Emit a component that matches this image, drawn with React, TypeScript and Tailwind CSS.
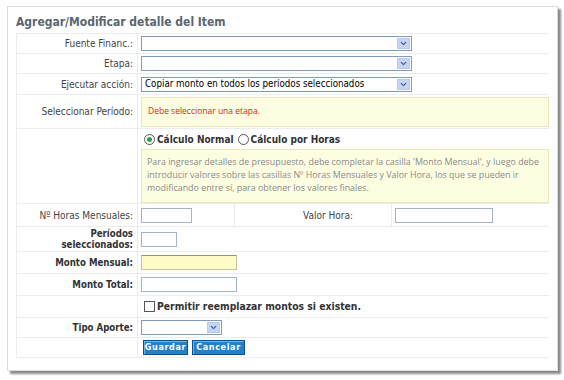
import { ChevronDown } from "lucide-react"

function Select({ width, value }: { width: string; value?: string }) {
  return (
    <div className={`flex h-[15px] items-center border border-[#7f9db9] bg-white ${width}`}>
      <span className="flex-1 truncate pl-[3px] text-[9.7px] leading-none text-black">{value}</span>
      <span className="m-px flex h-[11px] w-[13px] items-center justify-center border border-[#b8c9ef] bg-[#c6d5f7]">
        <ChevronDown className="h-[9px] w-[9px] text-[#4d6185]" strokeWidth={3.5} />
      </span>
    </div>
  )
}

function Input({ width, yellow }: { width: string; yellow?: boolean }) {
  return (
    <div
      className={`h-[15px] border ${width} ${
        yellow ? "border-[#c9c19a] border-t-[#a0956a] bg-[#fffcc8]" : "border-[#a5b2c2] bg-white"
      }`}
    />
  )
}

function Row({
  label,
  bold,
  height,
  children,
}: {
  label?: React.ReactNode
  bold?: boolean
  height: string
  children?: React.ReactNode
}) {
  return (
    <div className={`flex border-b border-[#ececec] ${height}`}>
      <div
        className={`flex w-[121px] shrink-0 items-center justify-end border-r border-[#ececec] pr-[4px] text-right leading-[11px] ${
          bold ? "text-[9.6px] font-bold text-[#333]" : "text-[#444]"
        }`}
      >
        {label}
      </div>
      <div className="flex flex-1 items-center pl-[3px]">{children}</div>
    </div>
  )
}

function Button({ label, width }: { label: string; width: string }) {
  return (
    <button
      className={`h-[15px] ${width} border border-[#0f5088] bg-[#2381c8] text-[9px] font-semibold leading-none tracking-[0.6px] text-white shadow-[inset_1px_1px_0_#6fb3e6]`}
    >
      {label}
    </button>
  )
}

export default function App() {
  return (
    <div className="h-[380px] w-[564px] bg-white pl-[7px] pt-[6px] font-['DejaVu_Sans','Verdana',sans-serif] text-[10px] [font-stretch:condensed]">
      <div className="h-[365px] w-[551px] border border-[#dcdcdc] bg-white px-[8px] shadow-[3px_3px_2px_#8a8a8a]">
        <h1 className="flex h-[26px] items-center pt-[4px] text-[12px] font-bold text-[#5a6670]">
          Agregar/Modificar detalle del Item
        </h1>

        <div className="border-l border-t border-[#ececec]">
          <Row label="Fuente Financ.:" height="h-[20px]">
            <Select width="w-[271px]" />
          </Row>
          <Row label="Etapa:" height="h-[20px]">
            <Select width="w-[271px]" />
          </Row>
          <Row label="Ejecutar acción:" height="h-[21px]">
            <Select width="w-[271px]" value="Copiar monto en todos los períodos seleccionados" />
          </Row>
          <Row label="Seleccionar Período:" height="h-[34px]">
            <div className="flex h-[30px] flex-1 items-center border border-[#ebe6b8] bg-[#fdfde2] pl-[6px] font-['Open_Sans',sans-serif] text-[8.5px] text-[#e0191b] [font-stretch:normal]">
              Debe seleccionar una etapa.
            </div>
          </Row>
          <Row height="h-[75px]">
            <div className="flex flex-1 flex-col">
              <div className="flex h-[20px] items-center gap-[4px] pl-[3px] text-[10px] font-bold text-[#333]">
                <span className="flex items-center gap-[2px]">
                  <span className="flex h-[11px] w-[11px] items-center justify-center rounded-full border border-[#555] bg-white">
                    <span className="h-[5px] w-[5px] rounded-full bg-[#2ea043]" />
                  </span>
                  Cálculo Normal
                </span>
                <span className="flex items-center gap-[2px]">
                  <span className="h-[11px] w-[11px] rounded-full border border-[#555] bg-white" />
                  Cálculo por Horas
                </span>
              </div>
              <div className="h-[54px] border border-[#ebe6b8] bg-[#fdfde2] px-[5px] pt-[5px] font-['Open_Sans',sans-serif] text-[8.9px] leading-[13px] text-[#8a8a8a] [font-stretch:normal]">
                Para ingresar detalles de presupuesto, debe completar la casilla 'Monto Mensual', y luego debe
                <br />
                introducir valores sobre las casillas Nº Horas Mensuales y Valor Hora, los que se pueden ir
                <br />
                modificando entre sí, para obtener los valores finales.
              </div>
            </div>
          </Row>
          <div className="flex h-[23px] border-b border-[#ececec]">
            <div className="flex w-[121px] shrink-0 items-center justify-end border-r border-[#ececec] pr-[4px] text-[#444]">
              Nº Horas Mensuales:
            </div>
            <div className="flex w-[97px] items-center border-r border-[#ececec] pl-[3px]">
              <Input width="w-[51px]" />
            </div>
            <div className="flex w-[157px] items-center justify-end border-r border-[#ececec] pr-[38px] text-[#444]">
              Valor Hora:
            </div>
            <div className="flex flex-1 items-center pl-[3px]">
              <Input width="w-[98px]" />
            </div>
          </div>
          <Row
            label={
              <>
                Períodos
                <br />
                seleccionados:
              </>
            }
            bold
            height="h-[25px]"
          >
            <Input width="w-[36px]" />
          </Row>
          <Row label="Monto Mensual:" bold height="h-[22px]">
            <Input width="w-[96px]" yellow />
          </Row>
          <Row label="Monto Total:" bold height="h-[22px]">
            <Input width="w-[96px]" />
          </Row>
          <Row height="h-[22px]">
            <span className="ml-[3px] flex items-center gap-[2px] text-[10.3px] font-bold text-[#333]">
              <span className="h-[11px] w-[11px] border border-[#555] bg-white" />
              Permitir reemplazar montos si existen.
            </span>
          </Row>
          <Row label="Tipo Aporte:" bold height="h-[20px]">
            <Select width="w-[81px]" />
          </Row>
          <Row height="h-[20px]">
            <div className="ml-[2px] flex gap-[4px]">
              <Button label="Guardar" width="w-[45px]" />
              <Button label="Cancelar" width="w-[53px]" />
            </div>
          </Row>
        </div>
      </div>
    </div>
  )
}
